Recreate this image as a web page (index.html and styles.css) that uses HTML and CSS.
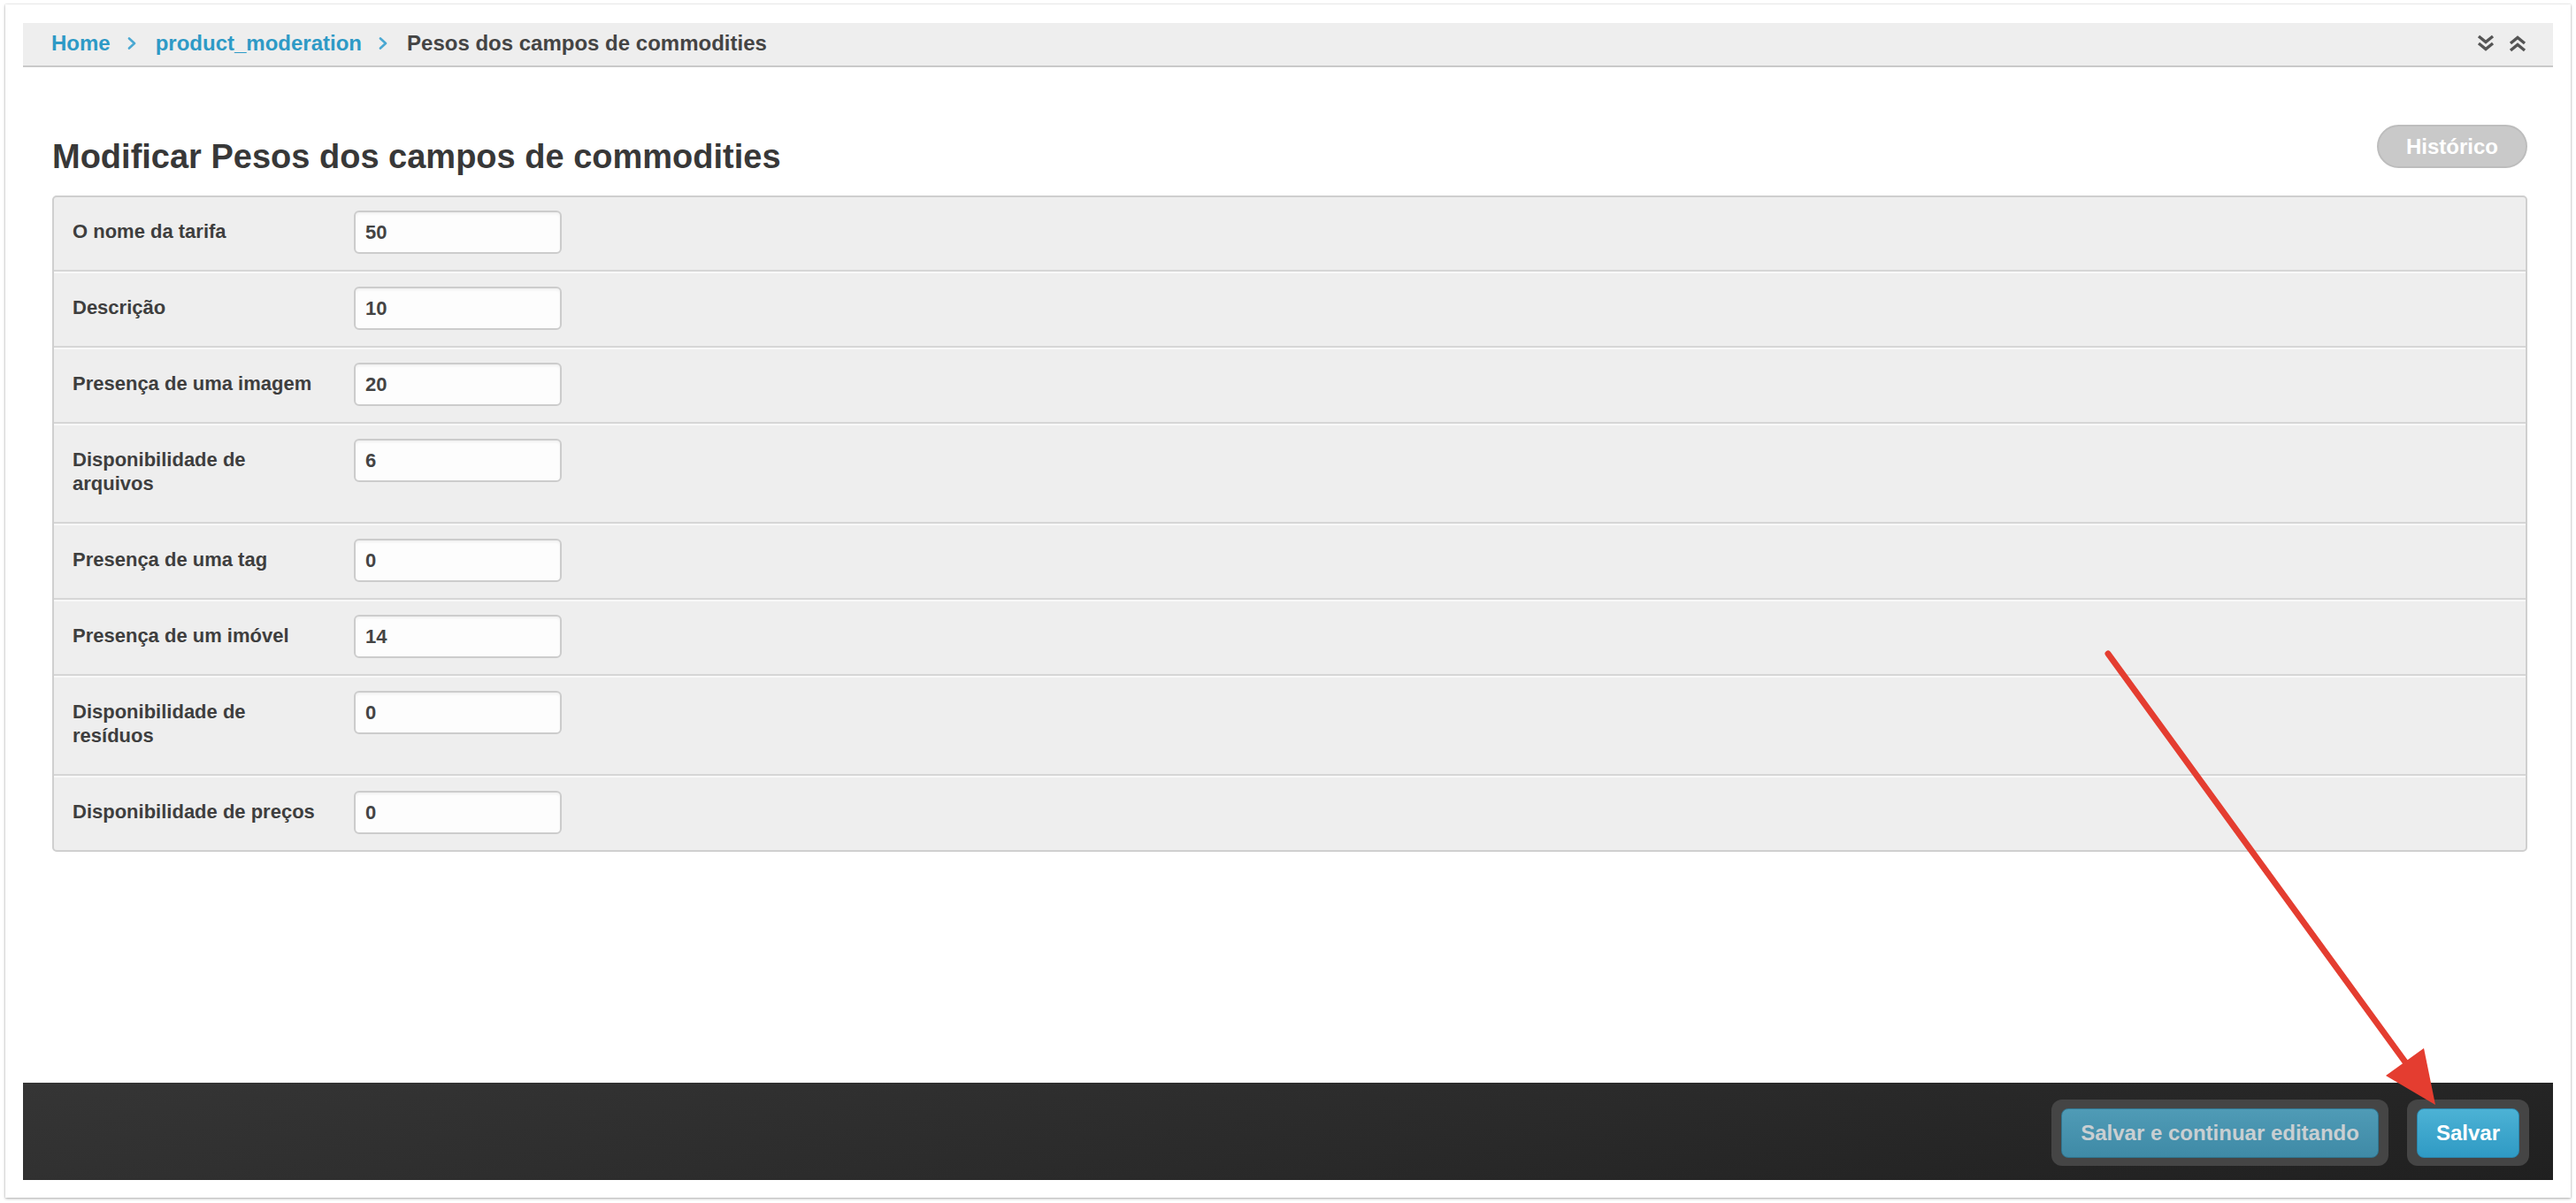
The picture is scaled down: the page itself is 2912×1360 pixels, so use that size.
FILE: index.html
```html
<!DOCTYPE html>
<html lang="pt">
<head>
<meta charset="utf-8">
<title>Modificar Pesos dos campos de commodities</title>
<link rel="stylesheet" href="styles.css">
</head>
<body>
<div class="frame">
  <div class="breadcrumbs">
    <nav class="crumbs">
      <a class="crumb-link" href="#">Home</a>
      <svg class="crumb-sep" viewBox="0 0 10 14" width="10" height="14"><path d="M2 1.5 L8 7 L2 12.5" fill="none" stroke="#4aa8d2" stroke-width="2.6" stroke-linecap="round" stroke-linejoin="round"/></svg>
      <a class="crumb-link" href="#">product_moderation</a>
      <svg class="crumb-sep" viewBox="0 0 10 14" width="10" height="14"><path d="M2 1.5 L8 7 L2 12.5" fill="none" stroke="#4aa8d2" stroke-width="2.6" stroke-linecap="round" stroke-linejoin="round"/></svg>
      <span class="crumb-current">Pesos dos campos de commodities</span>
    </nav>
    <div class="toggles">
      <svg class="toggle" viewBox="0 0 22 22" width="22" height="22"><path d="M3 3 L11 9.5 L19 3 M3 11 L11 17.5 L19 11" fill="none" stroke="#555" stroke-width="3.4" stroke-linejoin="miter"/></svg>
      <svg class="toggle" viewBox="0 0 22 22" width="22" height="22"><path d="M3 11 L11 4.5 L19 11 M3 19 L11 12.5 L19 19" fill="none" stroke="#555" stroke-width="3.4" stroke-linejoin="miter"/></svg>
    </div>
  </div>

  <main class="content">
    <div class="page-head">
      <h1 class="title">Modificar Pesos dos campos de commodities</h1>
      <a class="history-btn" href="#">Histórico</a>
    </div>

    <form class="fieldset">
      <div class="row"><label class="label">O nome da tarifa</label><input class="field" type="text" value="50"></div>
      <div class="row"><label class="label">Descrição</label><input class="field" type="text" value="10"></div>
      <div class="row"><label class="label">Presença de uma imagem</label><input class="field" type="text" value="20"></div>
      <div class="row"><label class="label">Disponibilidade de arquivos</label><input class="field" type="text" value="6"></div>
      <div class="row"><label class="label">Presença de uma tag</label><input class="field" type="text" value="0"></div>
      <div class="row"><label class="label">Presença de um imóvel</label><input class="field" type="text" value="14"></div>
      <div class="row"><label class="label">Disponibilidade de resíduos</label><input class="field" type="text" value="0"></div>
      <div class="row"><label class="label">Disponibilidade de preços</label><input class="field" type="text" value="0"></div>
    </form>
  </main>

  <footer class="submit-row">
    <div class="btn-frame"><button class="btn btn-muted" type="button">Salvar e continuar editando</button></div>
    <div class="btn-frame"><button class="btn btn-primary" type="button">Salvar</button></div>
  </footer>
</div>

<svg class="annotation" viewBox="0 0 2912 1360" width="2912" height="1360">
  <line x1="2383" y1="739" x2="2728" y2="1213" stroke="#e43d30" stroke-width="7" stroke-linecap="round"/>
  <polygon points="2753,1249 2697,1216 2740,1185" fill="#e43d30"/>
</svg>
</body>
</html>
```

FILE: styles.css
```css
html, body {
  margin: 0;
  padding: 0;
  background: #ffffff;
}

body {
  font-family: "Liberation Sans", Arial, sans-serif;
  color: #333;
  width: 2912px;
  height: 1360px;
  position: relative;
  overflow: hidden;
}

.frame {
  box-sizing: border-box;
  margin: 5px 6px 0 6px;
  width: 2900px;
  height: 1349px;
  background: #fff;
  box-shadow: 0 1px 3px rgba(0, 0, 0, 0.32), 0 0 1px rgba(0, 0, 0, 0.2);
  padding: 21px 20px 20px 20px;
  display: flex;
  flex-direction: column;
}

/* Breadcrumbs */
.breadcrumbs {
  box-sizing: border-box;
  height: 50px;
  background: #eeeeee;
  border-bottom: 2px solid #c9c9c9;
  display: flex;
  align-items: center;
  justify-content: space-between;
  padding: 0 29px 0 32px;
}

.crumbs {
  display: flex;
  align-items: center;
  gap: 0;
  font-size: 24px;
  font-weight: bold;
  line-height: 28px;
  margin-top: -2px;
}

.crumb-link {
  color: #2e9ac6;
  text-decoration: none;
}

.crumb-sep {
  margin: 0 22px 0 19px;
  display: block;
}

.crumb-current {
  color: #444;
}

.toggles {
  display: flex;
  align-items: center;
  gap: 14px;
  margin-top: -2px;
}

.toggle {
  display: block;
}

/* Content */
.content {
  flex: 1;
  padding: 65px 29px 0 33px;
}

.page-head {
  display: flex;
  align-items: flex-end;
  justify-content: space-between;
  margin-bottom: 21px;
}

.title {
  margin: 0;
  font-size: 38px;
  line-height: 46px;
  font-weight: bold;
  color: #383838;
}

.history-btn {
  box-sizing: border-box;
  display: block;
  height: 49px;
  line-height: 45px;
  padding: 0 31px;
  margin-bottom: 10px;
  border: 2px solid #bdbdbd;
  border-radius: 25px;
  background: #c9c9c9;
  color: #fff;
  font-size: 24px;
  font-weight: bold;
  text-decoration: none;
}

/* Fieldset */
.fieldset {
  margin: 0;
  background: #eeeeee;
  border: 2px solid #cfcfcf;
  border-radius: 5px;
}

.row {
  display: flex;
  align-items: flex-start;
  padding: 15px 21px 18px 21px;
}

.row:not(:last-child) {
  border-bottom: 2px solid #d6d6d6;
}

.row + .row {
  border-top: 2px solid #f8f8f8;
}

.label {
  box-sizing: border-box;
  width: 286px;
  margin-right: 32px;
  padding: 10px 0 12px 0;
  font-size: 22px;
  line-height: 27px;
  font-weight: bold;
  color: #3e3e3e;
}

.field {
  box-sizing: border-box;
  width: 235px;
  height: 49px;
  margin: 0;
  padding: 0 0 0 11px;
  border: 2px solid #cccccc;
  border-radius: 6px;
  background: #fdfdfd;
  box-shadow: inset 0 2px 3px rgba(0, 0, 0, 0.05);
  font-family: "Liberation Sans", Arial, sans-serif;
  font-size: 22px;
  font-weight: bold;
  color: #444;
  outline: none;
}

/* Submit row */
.submit-row {
  box-sizing: border-box;
  height: 110px;
  background: linear-gradient(172deg, #353535 0%, #2a2a2a 55%, #202020 100%);
  display: flex;
  align-items: center;
  justify-content: flex-end;
  gap: 21px;
  padding: 3px 27px 0 0;
}

.btn-frame {
  background: #454545;
  border-radius: 12px;
  padding: 10px 11px 9px 11px;
  display: flex;
}

.btn {
  box-sizing: border-box;
  height: 56px;
  padding: 0 21px;
  border-radius: 8px;
  font-family: "Liberation Sans", Arial, sans-serif;
  font-size: 24px;
  font-weight: bold;
  cursor: pointer;
}

.btn-muted {
  background: linear-gradient(180deg, #4f9bb6 0%, #3f8aa6 100%);
  border: 1px solid #2f7590;
  color: #c9cfd2;
}

.btn-primary {
  background: linear-gradient(180deg, #4cb2d5 0%, #2f9ac4 100%);
  border: 1px solid #2a86ad;
  color: #ffffff;
  padding: 0 21px;
}

/* Annotation overlay */
.annotation {
  position: absolute;
  left: 0;
  top: 0;
  pointer-events: none;
}
```
